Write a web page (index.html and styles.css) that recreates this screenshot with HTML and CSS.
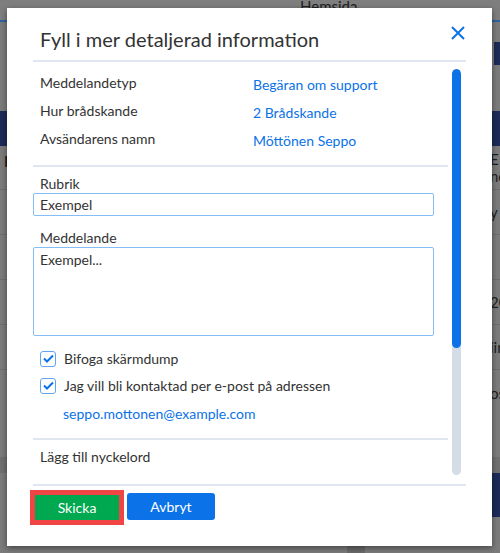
FILE: index.html
```html
<!DOCTYPE html>
<html lang="sv">
<head>
    <meta charset="UTF-8">
    <meta name="viewport" content="width=device-width, initial-scale=1.0">
    <title>Fyll i mer detaljerad information</title>
    <link rel="stylesheet" href="styles.css">
</head>
<body>

<!-- Page behind the dialog (dimmed) -->
<div class="page">
    <header class="topbar">
        <span class="nav-item">Hemsida</span>
    </header>
    <div class="toolbar">
        <span class="tool-btn"></span>
    </div>
    <div class="band"></div>
    <div class="list">
        <div class="list-row tall"><span class="left-mark">I</span><span class="cell">E<br>nc</span></div>
        <div class="list-row"><span class="cell">y</span></div>
        <div class="list-row"><span class="cell"></span></div>
        <div class="list-row"><span class="cell">20</span></div>
        <div class="list-row"><span class="cell">iir</span></div>
        <div class="list-row plain"><span class="cell">os</span></div>
    </div>
    <div class="bottom-strip"></div>
    <div class="bottom-band"></div>
    <div class="footer-gap"></div>
    <div class="footer-tab"></div>
</div>

<!-- Dialog -->
<div class="modal">
    <div class="modal-header">
        <h2>Fyll i mer detaljerad information</h2>
        <span class="close" title="Stäng">
            <svg width="14" height="14" viewBox="0 0 14 14">
                <path d="M1 1 L13 13 M13 1 L1 13" stroke="#0b72e7" stroke-width="2" fill="none"/>
            </svg>
        </span>
    </div>

    <div class="modal-body">
        <div class="scroll-content">
            <div class="section details">
                <div class="detail-row">
                    <span class="detail-label">Meddelandetyp</span>
                    <a class="detail-value">Begäran om support</a>
                </div>
                <div class="detail-row">
                    <span class="detail-label">Hur brådskande</span>
                    <a class="detail-value">2 Brådskande</a>
                </div>
                <div class="detail-row">
                    <span class="detail-label">Avsändarens namn</span>
                    <a class="detail-value">Möttönen Seppo</a>
                </div>
            </div>

            <div class="section fields">
                <label class="field-label" for="subject">Rubrik</label>
                <input id="subject" type="text" value="Exempel">

                <label class="field-label" for="message">Meddelande</label>
                <textarea id="message">Exempel...</textarea>

                <div class="check-row">
                    <span class="checkbox">
                        <svg width="11" height="9" viewBox="0 0 11 9">
                            <path d="M1 4.5 L4 7.5 L10 1.5" stroke="#0b72e7" stroke-width="2" fill="none"/>
                        </svg>
                    </span>
                    <span>Bifoga skärmdump</span>
                </div>
                <div class="check-row">
                    <span class="checkbox">
                        <svg width="11" height="9" viewBox="0 0 11 9">
                            <path d="M1 4.5 L4 7.5 L10 1.5" stroke="#0b72e7" stroke-width="2" fill="none"/>
                        </svg>
                    </span>
                    <span>Jag vill bli kontaktad per e-post på adressen</span>
                </div>
                <a class="email">seppo.mottonen@example.com</a>
            </div>

            <div class="section keywords">
                <span>Lägg till nyckelord</span>
            </div>
        </div>
        <div class="scrollbar">
            <div class="thumb"></div>
        </div>
    </div>

    <div class="modal-footer">
        <span class="highlight"><button class="btn btn-send">Skicka</button></span>
        <button class="btn btn-cancel">Avbryt</button>
    </div>
</div>

</body>
</html>
```

FILE: styles.css
```css
* {
    margin: 0;
    padding: 0;
    box-sizing: border-box;
    font-family: Lato, "Noto Sans", sans-serif;
}
body {
    width: 500px;
    height: 553px;
    overflow: hidden;
    background: #7b7b7b;
    position: relative;
}

/* background page */
.page {
    height: 553px;
    color: #1e1e1e;
    font-size: 14px;
}
.topbar {
    height: 22px;
    background: #7e7e7e;
    border-bottom: 2px solid #2d63a0;
    overflow: hidden;
}
.nav-item {
    display: block;
    padding-left: 300px;
    line-height: 12px;
    font-size: 15px;
    color: #202020;
}
.toolbar {
    height: 89px;
    display: flex;
    justify-content: flex-end;
    padding-top: 20px;
}
.tool-btn {
    width: 6px;
    height: 23px;
    background: #1c2b57;
}
.band {
    height: 35px;
    background: #1c2b57;
}
.list-row {
    height: 45px;
    border-bottom: 1px solid #6e6e6e;
    display: flex;
    align-items: center;
    font-size: 15px;
    color: #1e1e1e;
}
.list-row.tall {
    height: 44px;
    line-height: 17px;
}
.list-row.plain {
    border-bottom: none;
}
.left-mark {
    padding-left: 4px;
    align-self: flex-start;
    padding-top: 7px;
    font-weight: bold;
}
.cell {
    margin-left: auto;
    width: 10px;
    overflow: hidden;
    white-space: nowrap;
}
.bottom-strip {
    height: 58px;
    border-bottom: 16px solid #707070;
}
.bottom-band {
    height: 44px;
    background: #1c2b57;
    margin-left: 490px;
}
.footer-gap {
    height: 29px;
}
.footer-tab {
    height: 7px;
    width: 18px;
    margin-left: 347px;
    background: #6a6a6a;
}

/* dialog */
.modal {
    position: absolute;
    left: 7px;
    top: 8px;
    width: 485px;
    height: 538px;
    background: #fff;
    padding: 0 26px;
    box-shadow: 0 2px 6px rgba(0, 0, 0, 0.45);
    color: #333;
    display: flex;
    flex-direction: column;
}
.modal-header {
    height: 54px;
    flex-shrink: 0;
    display: flex;
    justify-content: space-between;
    align-items: flex-end;
    border-bottom: 2px solid #dfe6ef;
    padding: 0 1px 8px 7px;
}
.modal-header h2 {
    font-size: 20px;
    font-weight: normal;
    color: #333;
    line-height: 26px;
}
.close {
    display: flex;
    cursor: pointer;
    margin-bottom: 12px;
}

.modal-body {
    flex: 1;
    display: flex;
    min-height: 0;
    overflow: hidden;
}
.scroll-content {
    width: 415px;
    font-size: 14px;
}
.section {
    border-bottom: 2px solid #dfe6ef;
}
.details {
    padding: 6px 0 13px 7px;
}
.detail-row {
    display: flex;
    height: 28px;
    align-items: center;
}
.detail-label {
    width: 213px;
}
.detail-value {
    color: #0b72e7;
    padding-top: 5px;
}

.fields {
    padding: 8px 14px 14px 0;
}
.field-label {
    display: block;
    padding-left: 7px;
    line-height: 18px;
}
input,
textarea {
    display: block;
    width: 100%;
    border: 1.5px solid #85bdf6;
    border-radius: 2px;
    padding: 0 6px;
    font-size: 14px;
    color: #333;
    outline: none;
}
input {
    height: 23px;
    margin-bottom: 13px;
}
textarea {
    height: 89px;
    resize: none;
    padding-top: 3px;
    margin-bottom: 9px;
}
.check-row {
    display: flex;
    align-items: center;
    gap: 8px;
    height: 27px;
    padding-left: 7px;
}
.checkbox {
    width: 16px;
    height: 16px;
    border: 1.5px solid #5ea6f2;
    border-radius: 3px;
    display: flex;
    align-items: center;
    justify-content: center;
}
.email {
    display: block;
    color: #0b72e7;
    padding: 5px 0 0 30px;
    line-height: 20px;
}
.keywords {
    border-bottom: none;
    padding: 7px 0 0 7px;
    line-height: 20px;
}

.scrollbar {
    width: 9px;
    margin: 7px 0 9px 4px;
    background: #d3dce7;
    border-radius: 5px;
    overflow: hidden;
}
.thumb {
    height: 279px;
    background: #0b72e7;
    border-radius: 5px;
}

.modal-footer {
    height: 62px;
    flex-shrink: 0;
    border-top: 2px solid #dfe6ef;
    display: flex;
    align-items: flex-start;
    gap: 3px;
    padding-top: 4px;
}
.highlight {
    border: 5px solid #f04545;
    margin-left: -3px;
    display: flex;
}
.btn {
    border: none;
    color: #fff;
    font-size: 14px;
    cursor: pointer;
}
.btn-send {
    width: 84px;
    height: 25px;
    background: #00a84f;
}
.btn-cancel {
    width: 88px;
    height: 27px;
    margin-top: 3px;
    background: #0b72e7;
    border-radius: 3px;
}
```
